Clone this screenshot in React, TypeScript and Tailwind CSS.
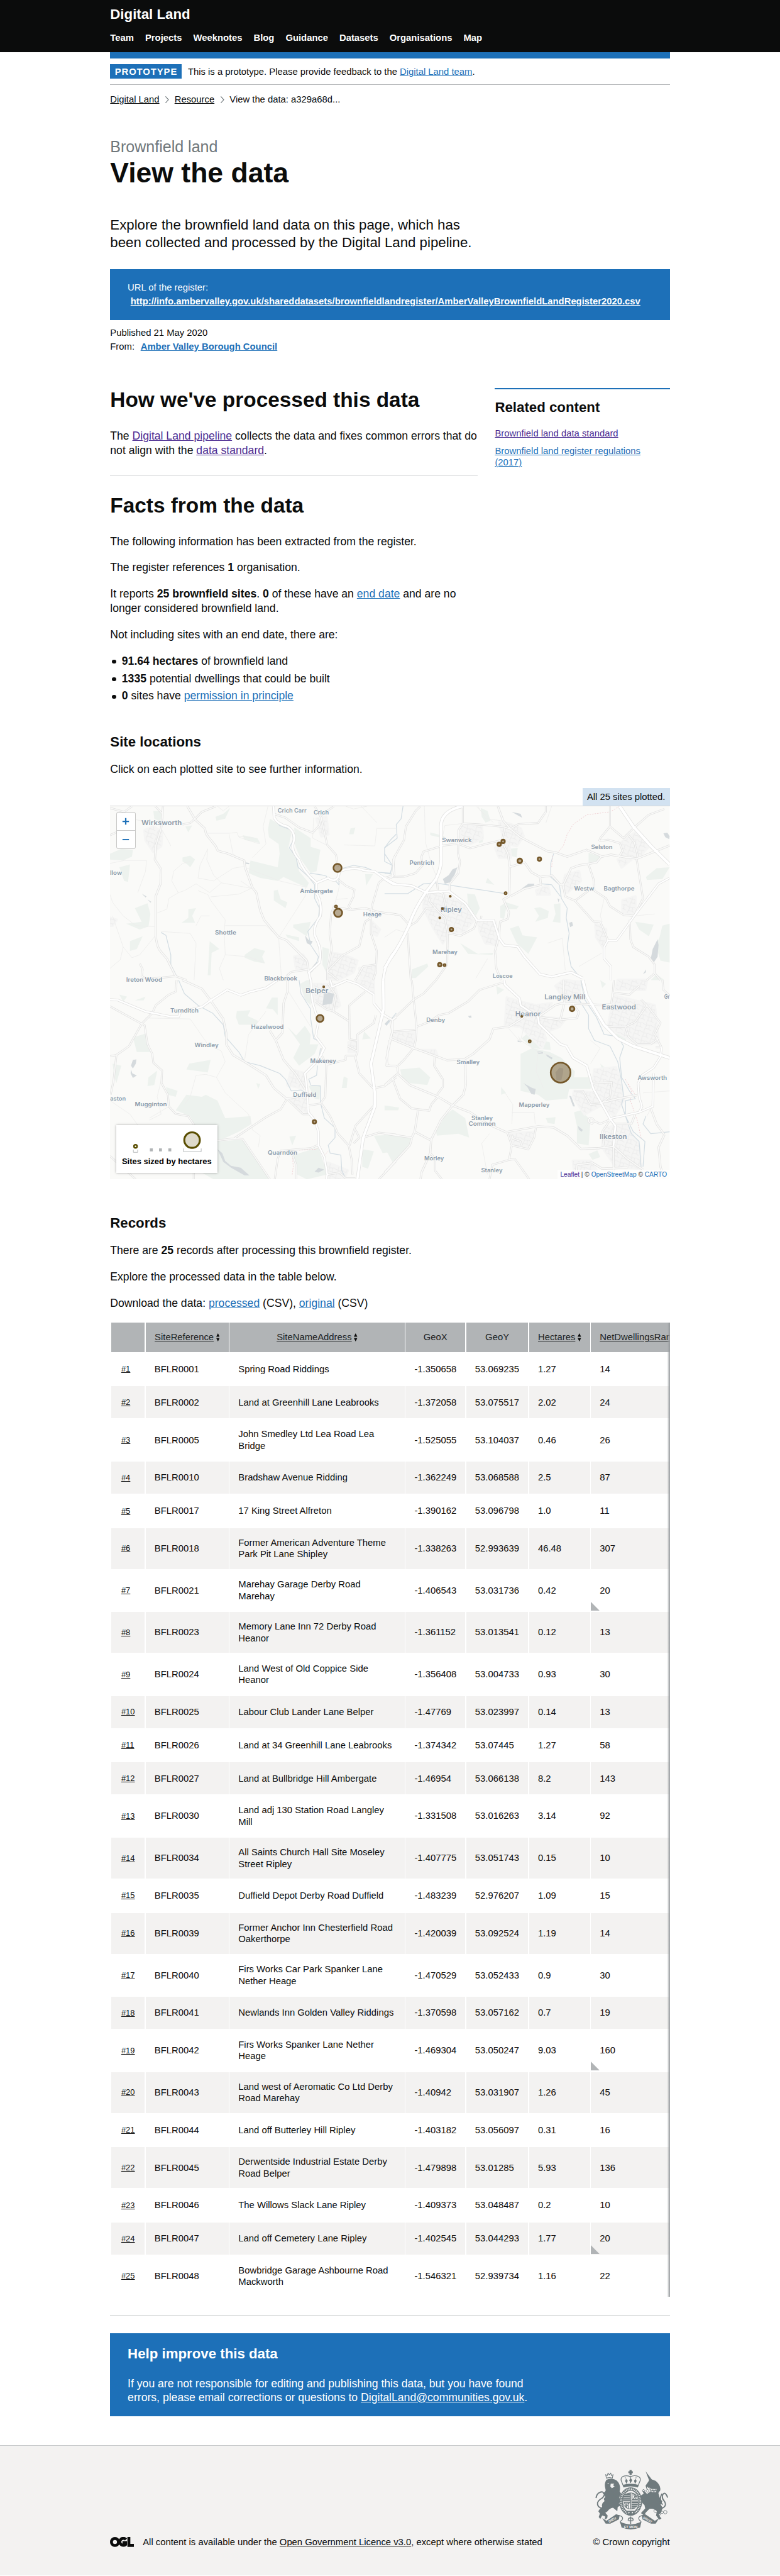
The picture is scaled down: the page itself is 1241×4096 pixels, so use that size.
import React from "react";

const link = "text-[#1d70b8] underline";
const visited = "text-[#4c2c92] underline";

/* ---------- Map data (drawn in four quadrants, 3 units per map pixel) ---------- */

type Quad = { dx: number; dy: number };
const NW: Quad = { dx: -27, dy: -126 };
const NE: Quad = { dx: 1413, dy: -126 };
const SW: Quad = { dx: -27, dy: 894 };
const SE: Quad = { dx: 1413, dy: 894 };

type Road = [Quad, number, string];
const roads: Road[] = [
  [NW, 11, "M425 126L465 195L515 240L522 270L570 330L582 355L630 368L718 405L722 440L760 545L780 570L800 660L820 710L895 800L935 815L1040 920L1050 975"],
  [NW, 11, "M300 126L297 170L290 240L262 330L258 400L290 450L287 525L262 590L262 780Q265 850 290 875L320 910L365 1000"],
  [NW, 10, "M400 220L440 212L465 190L500 155L572 126M870 165L930 185L1000 235L1070 262L1105 225L1115 185L1080 126M1115 190L1145 325L1190 375L1200 440M1115 170L1180 126"],
  [NW, 10, "M1205 505L1240 535L1285 555L1280 590L1255 640L1270 658L1340 650L1410 670L1500 682M1188 645L1265 658M1180 640L1165 680L1158 780L1168 860L1145 970L1145 1020"],
  [NW, 10, "M1370 700L1375 640L1410 520L1440 495L1490 480L1485 400L1500 370M1370 665L1370 780L1400 870L1395 980L1380 1020M1370 700L1340 720L1310 845L1220 895L1145 975M1145 975L1200 1020M1395 940L1330 950L1290 1020"],
  [NW, 10, "M935 1000L960 978L1045 965M27 135L100 155L140 126M27 275L60 260M260 126L297 165M180 935L195 965L190 1000L220 1015L365 1000L420 1020"],
  [NW, 14, "M868 126L872 185Q890 220 940 230Q985 260 972 310Q955 350 1000 400Q1020 460 1090 520L1088 570Q1120 620 1110 690Q1060 760 1090 810Q1120 870 1105 930L1050 980L1060 1022"],
  [NW, 14, "M1090 520L1150 495Q1200 530 1208 460Q1290 435 1330 455L1390 462Q1440 500 1500 528"],
  [NW, 16, "M1433 1020Q1440 930 1500 865"],

  [NE, 10, "M403 126L403 215L380 250L378 370L388 410L380 470L335 525L335 560M403 215L520 222L615 232L650 245M650 240L690 218L790 212L830 155L830 126"],
  [NE, 11, "M583 126L610 200L650 245L700 285L840 358L875 362L940 385L1040 350L1120 385L1165 375L1240 388L1300 395L1467 328"],
  [NE, 10, "M620 235L605 300L530 318L440 342L395 325L380 318L300 328L200 360L190 385L195 430L160 470L100 488L40 490L0 505M185 126L160 150L110 230L100 300L50 390L40 490"],
  [NE, 11, "M605 310L635 370L645 440L643 540L640 590L612 605L640 670L635 705L595 720L588 800L568 870L575 960L600 1020"],
  [NE, 11, "M645 438L720 415L755 465L800 490L862 482L905 530L920 530L960 445L1000 430L1090 415L1115 385M800 490L805 530L720 550L650 588"],
  [NE, 10, "M1160 126L1160 230L1110 290L1105 305M1160 230L1230 290L1280 240L1360 170L1440 140M1105 305L1150 298L1210 315L1225 355L1205 388M1255 275L1285 310L1305 390M1297 398L1330 600L1285 690"],
  [NE, 12, "M1467 495L1410 525L1285 690L1235 760L1195 815L1150 815L1130 850L1130 910L1165 950L1165 1020"],
  [NE, 10, "M918 530L930 590L980 612L1050 560M980 612L1075 718L1110 720L1150 815M1048 420L1075 500L1080 560L1140 600L1160 640L1230 685L1285 690M1262 710L1265 810L1280 850L1360 900L1390 940L1390 985L1350 1020M1390 985L1420 1020"],
  [NE, 10, "M0 675L80 685L130 740L165 720L215 650L260 650M120 780L125 880L135 1020M218 565L235 620L280 670L310 700L325 780L322 940L265 1020M325 778L390 792L460 755L475 715M268 500L275 565L300 575L320 660M498 690L496 712"],
  [NE, 14, "M0 500L40 525L140 535L215 570L330 562L415 625L475 712L560 712L590 805L615 840L685 848L720 900L800 990L860 1003L960 980L1020 1010"],
  [NE, 18, "M400 126Q290 150 290 230L292 400Q290 450 265 500L215 565Q150 660 125 740Q80 840 30 910Q5 950 0 960"],
  [NE, 19, "M1210 126L1280 230L1370 330L1467 425"],

  [SW, 10, "M27 135L190 225L245 170L262 130L330 75L365 60L370 0M190 225L205 232L220 330L245 380L250 425L295 465L292 530L325 590L330 650L365 688L430 700L460 745L458 1025"],
  [SW, 10, "M190 225L125 340L60 385L27 392M60 385L45 520L30 590M27 905L160 1025M940 612L1020 690L1050 690M935 615L905 665L830 705L665 815L580 825M665 815L710 818L850 1025"],
  [SW, 11, "M400 0L500 45L545 105L610 200L625 270L625 330L660 385L720 420L830 490L870 555L935 610L1000 600M940 0L940 60L920 120L915 270L880 310L850 260M880 310L920 410L980 480L1030 560"],
  [SW, 10, "M875 1025L890 920L905 878L1060 865L1105 845M960 880L985 950L985 1025M1145 1000L1210 990L1240 1020L1290 1020"],
  [SW, 10, "M1395 180L1385 220L1300 280L1300 370L1290 400L1310 480L1390 565M1300 310L1260 305L1258 130L1340 60M1255 210L1175 160L1140 150L1085 110M1175 160L1190 80L1150 20M1290 390L1240 390L1240 410L1140 435L1135 600L1110 635L1050 645M1250 340L1300 365"],
  [SW, 10, "M1115 635L1160 700L1200 790L1255 850L1270 920L1275 1000M1325 812L1410 785L1500 795M1390 555L1440 545L1500 500M1390 640L1290 750L1260 850M1470 210L1480 270L1455 380L1450 440L1500 440M1410 1025L1500 930M1120 350L1115 385L1145 440M1290 770L1310 810L1280 840"],
  [SW, 13, "M27 100L65 102L210 162L340 188L380 188L390 165L500 138L545 105L630 50L700 78L750 60L830 40L890 0"],
  [SW, 13, "M1060 0L1068 110L1100 215L1085 290L1130 350L1100 410L1030 480L1040 560L1048 680L1080 720L1100 780L1100 850L1130 910L1145 1000L1140 1025M1160 0L1170 35L1240 5"],
  [SW, 13, "M1240 0L1300 20L1385 75L1385 120L1430 175L1480 205L1500 190"],
  [SW, 17, "M1433 0L1435 150L1405 280L1370 430L1390 580L1390 650L1330 810L1300 1025"],

  [SE, 10, "M140 0L150 100L165 240L160 310L150 350M40 205L150 100L200 70L265 0M45 265L160 255M165 240L230 215L280 180L330 170L430 110L490 50L610 12"],
  [SE, 11, "M0 185L40 205L40 265L30 300L150 350L260 390L320 412L410 408L455 380L540 305L560 250L640 240L720 190"],
  [SE, 11, "M790 190L880 128L920 118L985 122L1060 125L1110 128L1170 125M905 200L925 120L920 0M800 190L900 205L990 195L1000 165L970 125"],
  [SE, 10, "M1180 0L1175 65L1165 130M1175 65L1260 75L1310 30M1130 235L1180 240L1240 240L1290 215L1350 130L1320 100M1240 240L1255 290L1300 330L1370 330L1410 300M1430 0L1435 50L1467 80M1395 345L1425 345M1350 130L1420 220L1390 280L1425 345"],
  [SE, 12, "M1425 345L1420 395L1385 450L1325 490L1305 530L1310 600L1325 650L1310 680L1160 712M1310 680L1380 650L1385 480"],
  [SE, 10, "M15 435L10 400L25 310M15 438L65 445L70 480L40 505L0 540M70 440L100 410L150 350M40 505L80 610L140 660L230 672L240 640L275 600M258 395L255 440L300 510L300 550L270 590"],
  [SE, 11, "M70 485L130 540L275 600L350 645L440 680L530 740L625 782L790 752L870 758L940 800L1010 868L1100 865L1178 855"],
  [SE, 11, "M415 410L418 540L405 590L350 645L290 720L240 820L235 890L190 990L185 1025M172 670L155 780L240 825M0 790L140 810L155 780M140 815L130 850L0 990"],
  [SE, 10, "M632 785L655 850L640 925L555 950L540 1025M655 850L740 870L770 810L780 755M640 925L670 920L720 990L745 1025M235 890L260 920L260 980L295 1025M655 795L660 815L700 830L705 850"],
  [SE, 11, "M1178 855L1180 1025M1178 855L1250 920L1330 975M1188 740L1270 740L1290 690M1120 630L1200 610L1310 590M1440 795L1410 860L1420 960L1440 1025M1440 795L1400 740L1370 660M985 1000L990 950L1070 940L1120 970L1250 965"],
  [SE, 10, "M1070 530L1170 525L1160 600L1120 630M975 570L1020 570L1060 640L1120 635M1165 715L1110 740L1080 725L1068 738Q1045 735 1050 715Q1065 700 1080 725M1165 715L1120 780L1130 860"],
  [SE, 14, "M615 0L620 25L695 95L700 130L790 190L795 225L905 330L935 340L970 400L1040 440L1075 560L1160 712L1188 750L1178 855"],
  [SE, 18, "M1020 0L1040 80L1130 230L1200 300L1280 340L1467 400"],
];

const lanes: [Quad, string][] = [
  [NW, "M520 265L640 265L680 260L690 285L790 318L800 318M640 270L660 370L690 400M690 280L770 290M530 345L525 400L560 480L600 520L755 548L690 578L545 592M600 520L540 570L470 525L410 560L380 570L330 600L320 655L270 675M755 548L700 510M720 435L660 445L560 510L480 495L490 430L530 345M378 570L345 510L355 460L400 420L440 410"],
  [NW, "M160 195L210 205L250 205M290 240L330 310L340 330M27 420L100 405L215 405L210 460L170 570M27 580L40 620L95 690L160 740L255 745M40 690L95 850L140 905L180 890L262 790M95 850L80 915L27 960"],
  [NW, "M480 560L530 580L545 610L620 710L615 770L620 890L590 960L610 1020M620 740L830 740L900 805M290 770L440 780L470 830L460 1020M620 890L740 900L820 930M895 800L910 1020M720 440L900 510L1035 542L1030 590L960 700L895 800M540 690L495 690L470 740"],
  [NW, "M580 126L610 150L640 126M760 390L830 320L815 230L840 126M1075 185L1070 290L1140 325M1240 126L1280 140L1350 126M1230 325L1390 330L1400 240L1500 240M1400 210L1320 126M1180 640L1200 570L1210 520M1250 600L1190 605"],
  [NE, "M205 126L210 310L240 420L268 490M400 215L310 225L290 330M480 126L520 190L600 200M860 126L830 212M120 780L60 760L0 800M475 130L560 210M840 830L915 805L930 970M530 910L470 1010M1130 600L1110 690L1120 720M1285 690L1390 680M1000 950L1120 880"],
  [SW, "M210 195L440 200L530 330L600 365L620 420L575 500L620 580L740 690L760 770L800 800L790 860M470 490L520 485L575 500M470 490L440 600L410 640M230 710L330 650M27 620L130 690L180 760M230 720L290 690L270 600L290 520M940 50L1060 240M830 160L740 280L720 410"],
  [SE, "M640 250L700 320L690 290M725 210L700 310L790 370L900 400M655 680L770 680L775 740M620 580L660 640L655 740M540 790L500 840L520 950L530 1000M1110 350L1060 430M1110 350L1060 310M790 370L780 470L820 560M1330 580L1467 570M1370 660L1350 700"],
];

const woods: [Quad, string][] = [
  [NW, "M850 190L920 235L950 230L960 270L945 340L990 400L1000 460L1050 520L1040 545L920 490L890 510L800 495L740 470L750 405L890 440L900 370L895 320L845 285L840 245Z"],
  [NW, "M975 235L1060 290L1060 335L1110 350L1090 460L1060 470L1010 400L980 330Z"],
  [NW, "M27 370L85 345L145 350L140 385L95 405L27 400ZM75 440L130 425L120 515L100 510ZM155 650L220 625L235 680L225 745L180 760L110 730L190 720ZM400 390L440 380L465 400L440 440L425 425L400 410ZM430 655L470 650L450 690L465 725L395 725L430 700Z"],
  [NW, "M720 890L770 855L825 870L810 900L825 935L770 925L720 905ZM870 560L890 555L905 605L940 620L930 650L870 610ZM570 180L610 165L645 135L620 190L575 200ZM710 275L785 290L800 315L720 300ZM970 735L1060 720L1040 795L970 750ZM540 820L590 860L550 880L545 995L530 995ZM130 820L195 795L165 860L130 870ZM250 150L300 150L285 205L255 190ZM415 230L450 225L430 260ZM930 785L1000 800L1000 820L940 800Z"],
  [NW, "M1265 240L1290 235L1280 270L1258 270ZM1340 475L1380 475L1345 535ZM1120 850L1155 860L1140 980L1120 940Z"],
  [NE, "M495 135L530 150L545 200L520 210L500 180ZM235 260L310 280L300 290L235 275ZM640 345L685 340L680 390L645 380ZM530 495L565 530L520 520ZM490 260L510 270L505 310L485 315ZM425 575L465 580L490 650L470 690L430 640ZM595 640L625 620L690 640L680 655L625 655L615 705L595 700Z"],
  [NE, "M645 755L690 740L710 790L785 800L740 885L680 830ZM770 650L800 645L845 665L840 700L775 720L795 690ZM870 630L905 625L905 725L865 720L880 680ZM390 830L480 885L560 880L555 890L430 885ZM140 965L220 935L225 950L160 1010L140 1010ZM1050 365L1110 385L1090 410L1050 415ZM1345 490L1400 445L1467 440L1430 500L1350 505ZM1290 720L1385 735L1360 795L1310 760ZM1430 740L1467 730L1467 930L1420 920L1395 840L1415 800ZM1370 1020L1400 990L1440 1020Z"],
  [SW, "M75 75L115 85L95 110ZM145 295L210 275L240 370L165 370ZM435 430L545 410L530 475L420 460ZM155 105L210 85L200 105ZM680 160L750 155L735 185L790 210L780 230L690 230L675 190ZM860 90L890 90L890 180L865 150L830 145ZM940 240L985 285L1030 235L1060 280L1055 330L1100 330L1080 380L1000 440L970 400L1005 330ZM1005 20L1040 0L1060 0L1060 130L1030 100Z"],
  [SW, "M365 670L420 590L500 600L520 590L580 620L620 710L750 700L755 740L690 780L580 830L580 745L460 745L440 700ZM580 830L710 820L850 1025L560 1025L500 990L580 990ZM225 500L270 465L255 540L220 545ZM315 550L375 570L365 600L325 590ZM970 900L1100 860L1120 920L1145 1000L1040 1025L990 1000ZM1050 545L1110 540L1105 615L1080 610ZM1325 870L1385 880L1355 970L1325 960ZM1385 800L1500 795L1500 880L1430 890ZM1230 495L1250 505L1245 555L1220 555ZM1335 265L1370 300L1325 305ZM40 430L85 440L60 530L50 500ZM780 530L800 535L790 560ZM950 805L985 800L965 850Z"],
  [SE, "M700 380L760 350L850 370L910 400L980 470L975 500L1070 500L1060 560L950 560L940 610L830 620L790 590L700 570ZM705 300L750 260L810 310L850 320L855 360L760 350ZM80 460L180 450L235 500L220 540L130 530L90 500ZM265 780L310 700L350 665L415 710L435 810L380 790L270 800ZM0 790L140 815L110 880L40 935L0 860ZM975 680L1010 670L1060 720L1050 850L990 840L990 750ZM1190 260L1240 245L1265 280L1240 310L1195 290ZM600 550L625 580L600 590ZM830 710L880 705L875 740L840 735ZM1110 430L1145 460L1130 490ZM0 645L75 655L70 670L0 670ZM575 30L615 50L580 75ZM1050 895L1095 875L1110 910L1070 925ZM1110 0L1140 20L1120 40Z"],
];

const towns: [Quad, string][] = [
  [NW, "M205 250L250 230L295 260L290 330L250 360L210 300ZM975 900L1020 890L1045 930L1045 970L985 960ZM1165 880L1230 890L1300 920L1280 980L1200 1020L1150 1015ZM1310 960L1390 940L1385 1020L1320 1020ZM1375 720L1415 760L1400 790L1380 780ZM1090 190L1140 180L1150 270L1115 280ZM27 700L60 710L40 740L27 740Z"],
  [NE, "M400 220L500 230L505 290L440 320L390 310ZM590 210L640 215L700 240L715 280L680 330L640 320L650 390L590 390L570 340L620 310ZM200 580L300 575L410 630L470 700L410 770L330 780L300 830L250 750L200 650ZM480 715L570 720L580 840L520 830L490 770ZM930 480L1000 460L1010 510L940 570L915 540ZM780 560L840 530L850 580L785 580ZM1220 310L1290 260L1360 330L1310 390L1225 380ZM1085 730L1140 760L1130 860L1090 800ZM1225 610L1290 590L1290 680L1225 670ZM1200 400L1270 400L1220 440Z"],
  [SW, "M1075 20L1180 20L1210 130L1170 160L1085 120ZM960 460L1030 480L1040 560L940 540ZM960 610L1045 600L1040 680L980 650ZM1255 320L1300 310L1300 370L1255 370ZM1290 0L1385 0L1385 70ZM1150 940L1250 980L1230 1025L1150 1025Z"],
  [SE, "M630 90L690 110L780 130L860 120L800 190L930 200L900 240L850 260L800 220L830 300L810 350L700 240L620 230ZM880 30L920 0L1010 10L1000 110L930 110ZM40 270L150 270L150 340L40 300ZM1080 460L1190 450L1220 540L1230 620L1180 700L1120 640L1070 540ZM975 570L1090 580L1120 640L1030 690L970 600ZM1130 760L1240 740L1310 850L1320 970L1190 960L1120 860ZM640 790L770 780L740 860L670 850ZM1180 80L1390 130L1410 320L1300 330L1150 240ZM1200 0L1350 0L1340 50L1190 50ZM970 930L1060 930L1120 1025L980 1020ZM190 360L260 360L270 385Z"],
];

const rivers: [Quad, string][] = [
  [NW, "M870 126L870 190L900 225L965 250L970 300L950 340L985 390L995 440L1050 490L1080 530L1080 600L1105 650L1100 700L1045 770L1060 840L1100 900L1085 950L1050 990M1055 470L1120 480L1140 485L1150 500L1180 500L1205 530L1205 490M1225 445L1280 430L1340 440L1400 465L1470 470L1480 430L1440 410L1440 340L1470 300L1500 270M290 775L315 790L340 890L340 940L370 1000"],
  [NE, "M95 126L85 190L60 220L65 290L0 340M0 470L35 475M40 430L0 370M0 575L120 575L200 525L260 520L620 575M810 525L860 530L905 590M870 370L855 420L855 490L900 530L910 600L940 650L935 700L950 780L940 850L960 950L1000 1000"],
  [SW, "M380 0L410 70L480 130L555 170L610 230L620 290L690 370L720 420L800 440L850 460L900 480L930 510L960 570L1010 565L1050 590M1000 0L1010 70L1060 150L1060 200L1075 300L1110 320M1095 440L1090 490L1050 510L1060 540L1110 545L1110 630L1130 710L1185 760L1185 810L1150 850L1160 890L1215 900L1220 980L1240 1020M1110 350L1100 430"],
  [SE, "M1010 0L1030 100L1090 190L1130 280L1200 290L1230 340L1210 400L1220 500L1260 570L1290 610L1240 620L1240 700L1270 790L1310 830L1320 960M1000 100L1050 180L1050 250L1080 310L1160 340L1200 420L1220 520L1230 600L1220 640L1240 700L1280 780L1340 830L1330 960M1345 700L1330 740L1370 790L1467 780M10 230L60 170"],
];

const lakes: [Quad, string][] = [
  [NE, "M300 500L330 480L350 450L375 440L360 480L345 500L345 515L310 525ZM705 550L740 525L770 525L770 540ZM1380 860L1405 810L1410 840L1405 900L1385 930L1370 910ZM950 725L965 720L970 740L955 748ZM1435 265L1455 262L1467 280L1465 295L1445 285ZM655 155L700 165L708 185L690 175ZM890 600L900 605L895 620ZM1330 990L1345 965L1345 980Z"],
  [NW, "M1030 790L1050 815L1070 820L1060 840L1040 830ZM1050 975L1095 920L1085 950L1065 980ZM190 575L215 590L210 595ZM220 605L240 618L235 622ZM725 415L745 418L742 424L725 422Z"],
  [SW, "M145 410L163 408L160 430L145 455L135 440ZM135 460L142 480L165 490L145 503L133 480ZM580 870L605 890L620 930L650 955L700 965L745 1005L720 1005L650 965L610 935ZM1080 985L1100 965L1130 975L1100 990ZM1130 60L1180 70L1170 120L1120 130Z"],
  [SE, "M785 365L815 370L815 380L790 380ZM830 380L865 400L860 408L835 392ZM715 530L760 555L778 560L772 590L755 585L735 550ZM995 750L1020 770L1015 780L1000 770ZM430 185L445 182L448 193L435 194ZM685 310L710 315L700 320L685 318ZM950 595L960 597L980 650L970 650ZM0 225L20 205L30 210L10 235Z"],
];

const paths: [Quad, string][] = [
  [NE, "M1210 126L1160 155L1040 170L970 220L940 270L920 330L895 360M865 380L860 440"],
  [SW, "M965 1000L970 960L965 890M1000 875L1090 870L1105 850L1130 900L1150 880"],
  [SE, "M1240 510L1270 570L1265 620L1300 720L1320 810M1255 535L1290 590"],
];

const labels: [Quad, string, number, number, number, number][] = [
  [NW, "Crich Carr", 964, 158, 148, 29],
  [NW, "Crich", 1114, 168, 78, 29],
  [NW, "Wirksworth", 293, 223, 208, 34],
  [NW, "Ambergate", 1090, 572, 170, 29],
  [NW, "Heage", 1377, 692, 95, 29],
  [NW, "Shottle", 622, 786, 109, 29],
  [NW, "Blackbrook", 906, 1022, 170, 29],
  [NW, "Ireton Wood", 203, 1028, 185, 29],
  [NW, "llow", 58, 479, 62, 29],
  [NE, "Swanwick", 372, 310, 152, 29],
  [NE, "Pentrich", 192, 426, 127, 29],
  [NE, "Selston", 1118, 346, 110, 29],
  [NE, "Westw", 1027, 559, 102, 29],
  [NE, "Bagthorpe", 1207, 559, 158, 29],
  [NE, "Ripley", 343, 671, 110, 34],
  [NE, "Marehay", 311, 887, 129, 29],
  [NE, "Loscoe", 608, 1010, 102, 29],
  [SW, "Belper", 1092, 66, 117, 34],
  [SW, "Turnditch", 410, 168, 145, 29],
  [SW, "Hazelwood", 837, 252, 167, 29],
  [SW, "Windley", 524, 346, 124, 29],
  [SW, "Makeney", 1124, 425, 133, 29],
  [SW, "Duffield", 1029, 599, 119, 29],
  [SW, "Mugginton", 237, 648, 165, 29],
  [SW, "aston", 68, 620, 80, 29],
  [SW, "Quarndon", 915, 897, 152, 29],
  [SE, "Langley Mill", 928, 100, 211, 34],
  [SE, "Eastwood", 1206, 150, 176, 34],
  [SE, "Heanor", 738, 186, 131, 34],
  [SE, "Denby", 263, 214, 97, 29],
  [SE, "Smalley", 430, 432, 118, 29],
  [SE, "Awsworth", 1378, 512, 151, 29],
  [SE, "Mapperley", 770, 653, 158, 29],
  [SE, "Stanley", 502, 720, 110, 29],
  [SE, "Common", 502, 750, 140, 29],
  [SE, "Ilkeston", 1177, 818, 140, 34],
  [SE, "Morley", 255, 927, 101, 29],
  [SE, "Stanley", 552, 990, 110, 29],
  [SE, "Gr", 1453, 97, 28, 29],
];

const sites: [Quad, number, number, number][] = [
  [NW, 1198, 443, 25], [NW, 1190, 642, 10], [NW, 1201, 674, 25],
  [NE, 610, 307, 13], [NE, 590, 322, 13], [NE, 696, 407, 16], [NE, 797, 398, 13],
  [NE, 623, 573, 10], [NE, 338, 589, 7.5], [NE, 298, 653, 7.5], [NE, 284, 700, 7.5],
  [NE, 344, 760, 13], [NE, 284, 941, 13], [NE, 309, 943, 10],
  [SW, 1127, 35, 7.5], [SW, 1108, 197, 22], [SW, 1079, 729, 13],
  [SE, 965, 148, 16], [SE, 706, 187, 7.5], [SE, 747, 315, 10], [SE, 906, 476, 55],
];

const at = (q: Quad) => `translate(${q.dx} ${q.dy})`;

function MapDrawing() {
  return (
    <svg viewBox="0 0 2880 1920" className="block h-[640px] w-[960px]" role="img" aria-label="Map of brownfield sites">
      <defs>
        <pattern id="streets" width="46" height="42" patternUnits="userSpaceOnUse" patternTransform="rotate(18)">
          <path d="M0 10L20 14L46 8M20 14L16 42M16 0L20 14M34 11L38 30L16 32M38 30L46 34M0 34L4 33" fill="none" stroke="#ebebeb" strokeWidth="3" />
        </pattern>
      </defs>
      <rect width="2880" height="1920" fill="#fafaf8" />
      {woods.map(([q, d], i) => <path key={i} transform={at(q)} d={d} fill="#edf2ee" />)}
      {towns.map(([q, d], i) => (
        <g key={i} transform={at(q)}>
          <path d={d} fill="#f5f5f4" stroke="#f5f5f4" strokeWidth="14" strokeLinejoin="round" />
          <path d={d} fill="url(#streets)" />
        </g>
      ))}
      {lakes.map(([q, d], i) => <path key={i} transform={at(q)} d={d} fill="#d5dadd" />)}
      {rivers.map(([q, d], i) => <path key={i} transform={at(q)} d={d} fill="none" stroke="#d3dde3" strokeWidth="4" strokeLinejoin="round" />)}
      {lanes.map(([q, d], i) => <path key={i} transform={at(q)} d={d} fill="none" stroke="#eeeeed" strokeWidth="3" strokeLinejoin="round" />)}
      {paths.map(([q, d], i) => <path key={i} transform={at(q)} d={d} fill="none" stroke="#f0cfd3" strokeWidth="3" strokeDasharray="7 6" />)}
      {roads.map(([q, w, d], i) => <path key={i} transform={at(q)} d={d} fill="none" stroke="#e1e1e0" strokeWidth={w} strokeLinejoin="round" />)}
      {roads.map(([q, w, d], i) => <path key={i} transform={at(q)} d={d} fill="none" stroke={w > 11 ? "#ffffff" : "#fafaf9"} strokeWidth={w - 5} strokeLinejoin="round" />)}
      {labels.map(([q, t, x, y, w, s], i) => (
        <text key={i} transform={at(q)} x={x} y={y} textAnchor="middle" textLength={w} lengthAdjust="spacingAndGlyphs" fontSize={s} fontWeight="600" fontFamily="Inter, sans-serif" fill="#8b9aaa" stroke="#fafaf8" strokeWidth="4" strokeLinejoin="round" paintOrder="stroke">{t}</text>
      ))}
      <path transform={at(SE)} d="M880 475L900 450L920 455L918 480L910 515L885 515Z" fill="#d3d8dc" />
      {sites.map(([q, x, y, r], i) => (
        <circle key={i} transform={at(q)} cx={x} cy={y} r={r - 4} fill="#745729" fillOpacity="0.5" stroke="#745729" strokeWidth={r < 12 ? 7 : 8.5} />
      ))}
    </svg>
  );
}

function SiteMap() {
  return (
    <div className="relative h-[641px] overflow-hidden border-t border-[#d5d7d8]">
      <MapDrawing />
      <div className="absolute left-[10px] top-[10px] w-[34px] rounded-[4px] border-2 border-black/20 bg-white bg-clip-padding">
        <div className="flex h-[31px] items-center justify-center border-b border-[#ccc]">
          <svg viewBox="0 0 14 14" className="size-[13px]"><path d="M7 1V13M1 7H13" stroke="#1d70b8" strokeWidth="2.6" /></svg>
        </div>
        <div className="flex h-[30px] items-center justify-center">
          <svg viewBox="0 0 14 14" className="size-[13px]"><path d="M1 7H13" stroke="#1d70b8" strokeWidth="2.2" /></svg>
        </div>
      </div>
      <div className="absolute left-[10px] top-[547px] h-[82px] w-[174px] bg-white shadow-[0_0_4px_rgba(0,0,0,0.35)]">
        <svg viewBox="0 0 522 246" className="absolute left-0 top-0 h-[82px] w-[174px]">
          <circle cx="99" cy="109" r="8" fill="#fff" stroke="#594d00" strokeWidth="8" />
          <path d="M88 126V140H110V126M346 120V137H437V120" fill="none" stroke="#b1b4b6" strokeWidth="3" />
          <path d="M173 120h15v15h-15zM220 120h15v15h-15zM268 120h15v15h-15z" fill="#b1b4b6" />
          <circle cx="390" cy="77" r="40" fill="#dedacb" stroke="#594d00" strokeWidth="10" />
        </svg>
        <p className="pt-[54px] text-center text-[14px] font-bold leading-[18px] text-black">Sites sized by hectares</p>
      </div>
      <div className="absolute bottom-0 right-0 bg-white/70 px-[5px] text-[11px] leading-[17px] text-[#333]">
        <span className="text-[#4c2c92]">Leaflet</span> | © <span className="text-[#1d70b8]">OpenStreetMap</span> © <span className="text-[#1d70b8]">CARTO</span>
      </div>
    </div>
  );
}

/* ---------- Records table ---------- */

const records: [string, string, string, string, string, string][] = [
  ["BFLR0001", "Spring Road Riddings", "-1.350658", "53.069235", "1.27", "14"],
  ["BFLR0002", "Land at Greenhill Lane Leabrooks", "-1.372058", "53.075517", "2.02", "24"],
  ["BFLR0005", "John Smedley Ltd Lea Road Lea Bridge", "-1.525055", "53.104037", "0.46", "26"],
  ["BFLR0010", "Bradshaw Avenue Ridding", "-1.362249", "53.068588", "2.5", "87"],
  ["BFLR0017", "17 King Street Alfreton", "-1.390162", "53.096798", "1.0", "11"],
  ["BFLR0018", "Former American Adventure Theme Park Pit Lane Shipley", "-1.338263", "52.993639", "46.48", "307"],
  ["BFLR0021", "Marehay Garage Derby Road Marehay", "-1.406543", "53.031736", "0.42", "20"],
  ["BFLR0023", "Memory Lane Inn 72 Derby Road Heanor", "-1.361152", "53.013541", "0.12", "13"],
  ["BFLR0024", "Land West of Old Coppice Side Heanor", "-1.356408", "53.004733", "0.93", "30"],
  ["BFLR0025", "Labour Club Lander Lane Belper", "-1.47769", "53.023997", "0.14", "13"],
  ["BFLR0026", "Land at 34 Greenhill Lane Leabrooks", "-1.374342", "53.07445", "1.27", "58"],
  ["BFLR0027", "Land at Bullbridge Hill Ambergate", "-1.46954", "53.066138", "8.2", "143"],
  ["BFLR0030", "Land adj 130 Station Road Langley Mill", "-1.331508", "53.016263", "3.14", "92"],
  ["BFLR0034", "All Saints Church Hall Site Moseley Street Ripley", "-1.407775", "53.051743", "0.15", "10"],
  ["BFLR0035", "Duffield Depot Derby Road Duffield", "-1.483239", "52.976207", "1.09", "15"],
  ["BFLR0039", "Former Anchor Inn Chesterfield Road Oakerthorpe", "-1.420039", "53.092524", "1.19", "14"],
  ["BFLR0040", "Firs Works Car Park Spanker Lane Nether Heage", "-1.470529", "53.052433", "0.9", "30"],
  ["BFLR0041", "Newlands Inn Golden Valley Riddings", "-1.370598", "53.057162", "0.7", "19"],
  ["BFLR0042", "Firs Works Spanker Lane Nether Heage", "-1.469304", "53.050247", "9.03", "160"],
  ["BFLR0043", "Land west of Aeromatic Co Ltd Derby Road Marehay", "-1.40942", "53.031907", "1.26", "45"],
  ["BFLR0044", "Land off Butterley Hill Ripley", "-1.403182", "53.056097", "0.31", "16"],
  ["BFLR0045", "Derwentside Industrial Estate Derby Road Belper", "-1.479898", "53.01285", "5.93", "136"],
  ["BFLR0046", "The Willows Slack Lane Ripley", "-1.409373", "53.048487", "0.2", "10"],
  ["BFLR0047", "Land off Cemetery Lane Ripley", "-1.402545", "53.044293", "1.77", "20"],
  ["BFLR0048", "Bowbridge Garage Ashbourne Road Mackworth", "-1.546321", "52.939734", "1.16", "22"],
];
const flagged = new Set(["BFLR0021", "BFLR0042", "BFLR0047"]);

const rowGrid = "grid grid-cols-[57px_142px_300px_102px_106px_104px_220px] gap-x-[2px]";

function Sortable({ children }: { children: React.ReactNode }) {
  return (
    <span className="inline-flex items-center gap-[4px]">
      <span className="underline">{children}</span>
      <svg viewBox="0 0 6 14" className="h-[14px] w-[6px]"><path d="M3 0L6 6H0ZM3 14L6 8H0Z" fill="#0b0c0c" /></svg>
    </span>
  );
}

function RecordsTable() {
  return (
    <div className="relative overflow-hidden">
      <table className="block w-[1047px] p-[2px] text-[16px] leading-[20px]">
        <thead className="block">
          <tr className={`${rowGrid} h-[50px] text-[#222526] [&>th]:flex [&>th]:items-center [&>th]:justify-center [&>th]:bg-[#b1b4b6] [&>th]:p-0 [&>th]:font-normal`}>
            <th />
            <th><Sortable>SiteReference</Sortable></th>
            <th><Sortable>SiteNameAddress</Sortable></th>
            <th>GeoX</th>
            <th>GeoY</th>
            <th><Sortable>Hectares</Sortable></th>
            <th><span className="w-full pl-[15px] text-left"><Sortable>NetDwellingsRangeFrom</Sortable></span></th>
          </tr>
        </thead>
        <tbody className="block">
          {records.map(([ref, name, x, y, ha, net], i) => (
            <tr key={ref} className={`${rowGrid} mt-[2px] min-h-[55px] [&>td]:flex [&>td]:items-center [&>td]:px-[15px] [&>td]:py-0 [&:nth-child(even)>td]:bg-[#f3f2f1]`}>
              <td><span className="ml-[2px] mt-px text-[14px] underline">#{i + 1}</span></td>
              <td>{ref}</td>
              <td><span className="my-[15px] block w-[270px]">{name}</span></td>
              <td>{x}</td>
              <td>{y}</td>
              <td>{ha}</td>
              <td className="relative">
                {net}
                {flagged.has(ref) && (
                  <svg viewBox="0 0 15 15" className="absolute bottom-[1px] left-0 size-[15px]"><path d="M0 0L15 15H0Z" fill="#b1b4b6" /></svg>
                )}
              </td>
            </tr>
          ))}
        </tbody>
      </table>
      <div className="absolute bottom-[2px] right-0 top-[2px] w-[4px] bg-gradient-to-r from-[#b1b4b6]/20 to-[#969a9d]" />
    </div>
  );
}

/* ---------- Footer drawings ---------- */

function Crest() {
  const c = "#6f7a7d";
  const bg = "#f3f2f1";
  return (
    <svg viewBox="26 26 376 307" className="h-[102px] w-[125px]" aria-hidden="true">
      {/* lion */}
      <path fill={c} d="M84 78Q98 70 118 74Q140 78 150 100Q157 118 152 138L160 150L150 168Q158 190 148 200L158 210L142 218L140 240L118 222Q100 224 90 240L78 248L90 262L88 276L74 284L78 268L62 262L52 280L44 270L50 252L42 240Q48 226 62 218Q56 200 74 188L70 176L78 166L72 150L80 132L76 112Q74 92 84 78Z" />
      <path fill={bg} d="M106 98L124 98L118 106L126 112L112 122L104 112ZM88 96L96 94L94 100Z" />
      <path fill="none" stroke={c} strokeWidth="6" d="M64 226Q34 220 38 196Q44 182 62 172Q78 158 72 142M30 172Q34 150 48 144Q68 134 70 152" />
      <path fill={bg} stroke={c} strokeWidth="3.5" d="M84 70L80 52L88 56L92 44L99 52L106 44L110 56L118 52L114 70Q99 64 84 70Z" />
      {/* crown */}
      <path fill={bg} stroke={c} strokeWidth="4" d="M172 112L160 82Q156 62 178 58Q198 54 208 64Q220 54 240 58Q262 62 258 82L246 112Q208 102 172 112Z" />
      <path fill={c} d="M170 104Q208 92 248 104L246 118Q208 106 172 118ZM203 28H214V34H220V44H214V52H203V44H197V34H203ZM180 84l7-10 7 10-7 14ZM201 80l8-12 8 12-8 14ZM226 84l7-10 7 10-7 14Z" />
      <path fill="none" stroke={c} strokeWidth="4" strokeDasharray="4 4" d="M208 58V98M180 66Q190 78 186 98M238 66Q228 78 232 98" />
      {/* garter and shield */}
      <ellipse cx="209" cy="190" rx="50" ry="64" fill="none" stroke={c} strokeWidth="18" />
      <ellipse cx="209" cy="190" rx="50" ry="64" fill="none" stroke={bg} strokeWidth="9" strokeDasharray="4 5" />
      <circle cx="209" cy="187" r="42" fill={bg} stroke={c} strokeWidth="3" />
      <path fill={c} d="M172 156Q186 146 205 147V184H170Q168 168 172 156ZM213 190H248Q246 214 234 224Q224 230 213 228Z" />
      <path stroke={bg} strokeWidth="2.5" d="M174 160H204M172 170H204M172 178H204M214 200H246M214 210H242M214 219H238" />
      <path fill="none" stroke={c} strokeWidth="4" d="M209 146V230M168 187H250M216 150Q238 150 244 180L216 180ZM224 154L236 176M236 158L222 178M176 194L186 222M184 192L190 226M194 192L198 228M174 194H204L184 220" />
      <path fill={c} d="M188 238L230 238L226 258L209 264L192 258Z" /><path fill={bg} d="M196 246l5-3 3 6-6 3ZM214 246l5-3 3 6-6 3Z" />
      {/* unicorn */}
      <path fill={c} d="M286 34L318 76Q340 80 352 98Q364 114 362 132L352 146L358 168L372 190L364 206L374 222L366 246L354 260L368 278L356 284L340 262L344 240Q328 224 306 228L288 246L278 262L262 250L284 226L280 208Q262 196 266 178L256 162L276 150L270 134L284 140L294 152L308 140L306 118L290 124L286 108L300 88L304 80Z" />
      <path fill="none" stroke={bg} strokeWidth="6" strokeDasharray="5 3" d="M294 116Q312 132 342 128M298 128Q318 144 344 138" />
      <path fill="none" stroke={c} strokeWidth="6" d="M368 226Q398 214 384 190Q366 172 376 152Q388 138 400 170M374 206Q352 186 370 150" />
      <path fill="none" stroke={c} strokeWidth="3" d="M296 128a7 7 0 1 1-1 0M304 146a6 6 0 1 1-1 0M276 128a6 6 0 1 1-1 0M338 232a9 7 0 1 1-1 0M356 248a8 7 0 1 1-1 0M372 240a7 6 0 1 1-1 0M388 236a9 9 0 1 1-1 0" />
      {/* ribbon */}
      <path fill={c} d="M62 276L84 290L134 256L152 262L148 282L104 304L80 304ZM356 276L334 290L284 256L266 262L270 282L314 304L338 304ZM154 294Q209 322 264 294L258 324Q209 344 162 324Z" />
      <path fill="none" stroke={c} strokeWidth="4" d="M146 262Q176 268 164 286Q150 294 160 304M272 262Q242 268 254 286Q268 294 258 304" />
      <path fill="none" stroke={c} strokeWidth="5" d="M209 268V306M198 290H220M209 276Q196 272 196 288M209 276Q222 272 222 288" />
      <g fill={bg} fontFamily="Liberation Sans, sans-serif" fontWeight="700" fontSize="18">
        <text x="209" y="329" textAnchor="middle">ET MON</text>
        <text transform="translate(98 300) rotate(-28)">DIEU</text>
        <text transform="translate(272 277) rotate(30)" fontSize="16">DROIT</text>
      </g>
    </svg>
  );
}

function OglMark() {
  return (
    <svg viewBox="0 0 41 17" className="h-[17px] w-[41px]" aria-label="OGL">
      <g fill="none" stroke="#0b0c0c" strokeWidth="5">
        <circle cx="8.5" cy="8.5" r="6" />
        <path d="M27.5 4.4A6 6 0 1 0 26.8 12.8V9.4H21.5" />
        <path d="M32.4 0V14.4H41" />
      </g>
    </svg>
  );
}

/* ---------- Page ---------- */

const navItems = ["Team", "Projects", "Weeknotes", "Blog", "Guidance", "Datasets", "Organisations", "Map"];

function Chevron() {
  return <svg viewBox="0 0 7 12" className="mx-[9px] h-[12px] w-[8px]"><path d="M1 0.5L6 6L1 11.5" fill="none" stroke="#6f777b" strokeWidth="1.2" /></svg>;
}

export default function App() {
  return (
    <div className="min-h-[4416px] bg-white font-['Liberation_Sans',Arial,sans-serif] text-[16px] leading-[20px] text-[#0b0c0c] [zoom:0.9275]">
      <header className="h-[90px] bg-[#0b0c0c] text-white">
        <div className="mx-auto w-[960px]">
          <p className="pt-[10px] text-[24px] font-bold leading-[30px]">Digital Land</p>
          <nav className="flex gap-[19.4px] pt-[15px] text-[16px] font-bold leading-[20px]">
            {navItems.map((n) => <a key={n}>{n}</a>)}
          </nav>
        </div>
      </header>

      <main className="mx-auto w-[960px]">
        <div className="h-[10px] bg-[#1d70b8]" />
        <div className="flex items-center border-b border-[#b1b4b6] py-[10px]">
          <strong className="h-[25px] bg-[#1d70b8] pl-[8px] pr-[7px] text-[16px] leading-[26px] tracking-[1px] text-white">PROTOTYPE</strong>
          <p className="ml-[11px] pt-[2px]">This is a prototype. Please provide feedback to the <a className={link}>Digital Land team</a>.</p>
        </div>
        <div className="mt-[15px] flex items-center">
          <a className="underline">Digital Land</a><Chevron />
          <a className="underline">Resource</a><Chevron />
          <span>View the data: a329a68d...</span>
        </div>

        <p className="mt-[56px] text-[27px] leading-[30px] text-[#6f777b]">Brownfield land</p>
        <h1 className="mt-[5px] text-[48px] font-bold leading-[50px]">View the data</h1>
        <p className="mt-[49px] w-[630px] text-[24px] leading-[30px]">Explore the brownfield land data on this page, which has been collected and processed by the Digital Land pipeline.</p>

        <div className="mt-[30px] h-[88px] bg-[#1d70b8] px-[30px] py-[20px] leading-[24px] text-white">
          <p>URL of the register:</p>
          <p className="whitespace-nowrap pl-[5px] font-bold underline">http://info.ambervalley.gov.uk/shareddatasets/brownfieldlandregister/AmberValleyBrownfieldLandRegister2020.csv</p>
        </div>
        <p className="mt-[12px]">Published 21 May 2020</p>
        <p className="mt-[3px]">From: <a className={`ml-[6px] font-bold ${link}`}>Amber Valley Borough Council</a></p>

        <div className="mt-[61px] grid grid-cols-[630px_300px] gap-x-[30px]">
          <div className="text-[19px] leading-[25px]">
            <h2 className="text-[36px] font-bold leading-[40px]">How we've processed this data</h2>
            <p className="mt-[30px] whitespace-nowrap">The <a className={visited}>Digital Land pipeline</a> collects the data and fixes common errors that do<br />not align with the <a className={visited}>data standard</a>.</p>
            <hr className="mt-[30px] border-[#d5d7d8]" />
            <h2 className="mt-[30px] text-[36px] font-bold leading-[40px]">Facts from the data</h2>
            <div className="mt-[30px] space-y-[20px]">
              <p>The following information has been extracted from the register.</p>
              <p>The register references <b>1</b> organisation.</p>
              <p>It reports <b>25 brownfield sites</b>. <b>0</b> of these have an <a className={link}>end date</a> and are no<br />longer considered brownfield land.</p>
              <p>Not including sites with an end date, there are:</p>
            </div>
            <ul className="mt-[20px] space-y-[5px]">
              {[
                <><b>91.64 hectares</b> of brownfield land</>,
                <><b>1335</b> potential dwellings that could be built</>,
                <><b>0</b> sites have <a className={link}>permission in principle</a></>,
              ].map((item, i) => (
                <li key={i} className="flex items-center pl-[3px]">
                  <span className="mr-[10px] mt-[2px] size-[7px] rounded-full bg-[#0b0c0c]" />
                  <span>{item}</span>
                </li>
              ))}
            </ul>
          </div>
          <aside>
            <div className="h-[2.2px] bg-[#1d70b8]" />
            <h2 className="mt-[16px] text-[24px] font-bold leading-[30px]">Related content</h2>
            <p className="mt-[20px]"><a className={visited}>Brownfield land data standard</a></p>
            <p className="mt-[10px]"><a className={link}>Brownfield land register regulations (2017)</a></p>
          </aside>
        </div>

        <div className="text-[19px] leading-[25px]">
          <h3 className="mt-[51px] text-[24px] font-bold leading-[30px]">Site locations</h3>
          <p className="mt-[20px]">Click on each plotted site to see further information.</p>
        </div>
        <div className="mt-[19px] flex justify-end">
          <p className="h-[30px] w-[150px] bg-[#d2e2f1] text-center leading-[31px]">All 25 sites plotted.</p>
        </div>
        <SiteMap />

        <div className="text-[19px] leading-[25px]">
          <h3 className="mt-[60px] text-[24px] font-bold leading-[30px]">Records</h3>
          <p className="mt-[20px]">There are <b>25</b> records after processing this brownfield register.</p>
          <p className="mt-[20px]">Explore the processed data in the table below.</p>
          <p className="mt-[20px]">Download the data: <a className={link}>processed</a> (CSV), <a className={link}>original</a> (CSV)</p>
        </div>
        <div className="mt-[19px]">
          <RecordsTable />
        </div>

        <hr className="mt-[30px] border-[#d5d7d8]" />
        <section className="mt-[30px] h-[142px] bg-[#1d70b8] px-[30px] py-[20px] text-white">
          <h3 className="text-[24px] font-bold leading-[30px]">Help improve this data</h3>
          <p className="mt-[24px] text-[19px] leading-[24px]">If you are not responsible for editing and publishing this data, but you have found<br />errors, please email corrections or questions to <a className="underline">DigitalLand@communities.gov.uk</a>.</p>
        </section>
      </main>

      <footer className="mt-[50px] h-[223px] border-t border-[#c9cccd] bg-[#f3f2f1] pt-[40px]">
        <div className="mx-auto flex h-[135px] w-[960px] items-end justify-between">
          <div className="flex items-center gap-[15px]">
            <OglMark />
            <p>All content is available under the <a className="underline">Open Government Licence v3.0</a>, except where otherwise stated</p>
          </div>
          <div className="flex flex-col items-end">
            <div className="mr-[3px]"><Crest /></div>
            <p className="mt-[12px]">© Crown copyright</p>
          </div>
        </div>
      </footer>
    </div>
  );
}
